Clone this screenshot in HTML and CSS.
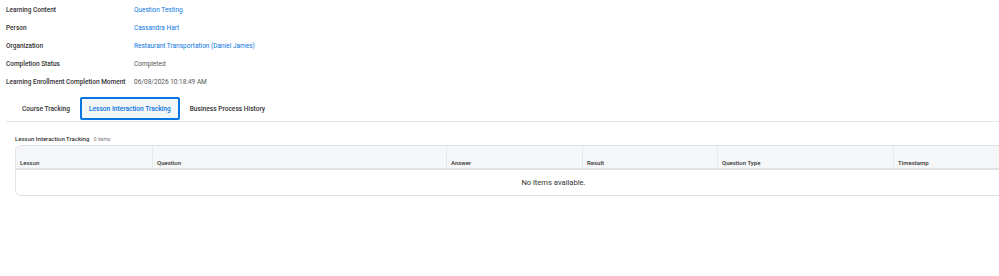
FILE: index.html
```html
<!DOCTYPE html>
<html lang="en">
  <head>
    <meta charset="UTF-8" />
    <meta name="viewport" content="width=device-width, initial-scale=1.0" />
    <title>Learning Enrollment</title>
    <link rel="stylesheet" href="styles.css">
  </head>
  <body>
    <div id="fields">
      <div class="row">
        <div class="label">Learning Content</div>
        <div class="value link">Question Testing</div>
      </div>
      <div class="row">
        <div class="label">Person</div>
        <div class="value link">Cassandra Hart</div>
      </div>
      <div class="row">
        <div class="label">Organization</div>
        <div class="value link">Restaurant Transportation (Daniel James)</div>
      </div>
      <div class="row">
        <div class="label">Completion Status</div>
        <div class="value">Completed</div>
      </div>
      <div class="row">
        <div class="label">Learning Enrollment Completion Moment</div>
        <div class="value">06/08/2026 10:18:49 AM</div>
      </div>
    </div>

    <div id="tabs">
      <div class="tab">Course Tracking</div>
      <div class="tab active">Lesson Interaction Tracking</div>
      <div class="tab">Business Process History</div>
    </div>

    <div id="section">
      <div class="section-title">Lesson Interaction Tracking <span class="count">0 items</span></div>
      <div class="grid">
        <div class="grid-head">
          <div class="col c1">Lesson</div>
          <div class="col c2">Question</div>
          <div class="col c3">Answer</div>
          <div class="col c4">Result</div>
          <div class="col c5">Question Type</div>
          <div class="col c6">Timestamp</div>
        </div>
        <div class="grid-empty">No items available.</div>
      </div>
    </div>
  </body>
</html>
```

FILE: styles.css
```css
body {
  font-family: Roboto, "Liberation Sans", Arial, sans-serif;
  margin: 0;
  padding: 0;
  background-color: #fff;
  color: #333;
  overflow: hidden;
}
#fields {
  padding: 1px 0 0 6px;
}
.row {
  display: flex;
  align-items: center;
  height: 18px;
  font-size: 6.5px;
  white-space: nowrap;
}
.label {
  width: 128px;
  font-weight: 500;
  color: #333;
}
.value {
  color: #555;
}
.value.link {
  color: #0875e1;
}
#tabs {
  display: flex;
  align-items: stretch;
  margin: 6px 0 0 6px;
  padding-left: 9px;
  height: 24px;
  border-bottom: 1px solid #e3e5e8;
  font-size: 6.6px;
  font-weight: 500;
  white-space: nowrap;
}
.tab {
  display: flex;
  align-items: center;
  padding: 0 7px;
  margin: 0 3px 1px 0;
  color: #333;
}
.tab.active {
  color: #0875e1;
  background-color: #f5f6f7;
  border: 2px solid #0875e1;
  border-radius: 2px;
  box-sizing: border-box;
}
#section {
  padding: 13px 0 0 15px;
}
.section-title {
  font-size: 6px;
  font-weight: 500;
  color: #333;
  height: 10px;
}
.count {
  font-size: 5px;
  font-weight: 400;
  color: #777;
  margin-left: 3px;
}
.grid {
  width: 1075px;
  border: 1px solid #dfe2e6;
  border-radius: 6px;
  overflow: hidden;
}
.grid-head {
  display: flex;
  height: 22px;
  background-color: #f5f6f7;
  border-bottom: 2px solid #dfe2e6;
}
.col {
  display: flex;
  align-items: flex-end;
  padding: 0 0 2px 4px;
  font-size: 6px;
  font-weight: 500;
  color: #333;
  border-right: 1px solid #e6e8eb;
  box-sizing: border-box;
}
.c1 { width: 137px; }
.c2 { width: 294px; }
.c3 { width: 136px; }
.c4 { width: 135px; }
.c5 { width: 176px; }
.c6 { flex: 1; border-right: none; }
.grid-empty {
  height: 25px;
  display: flex;
  align-items: center;
  justify-content: center;
  font-size: 7.6px;
  color: #333;
}
```
